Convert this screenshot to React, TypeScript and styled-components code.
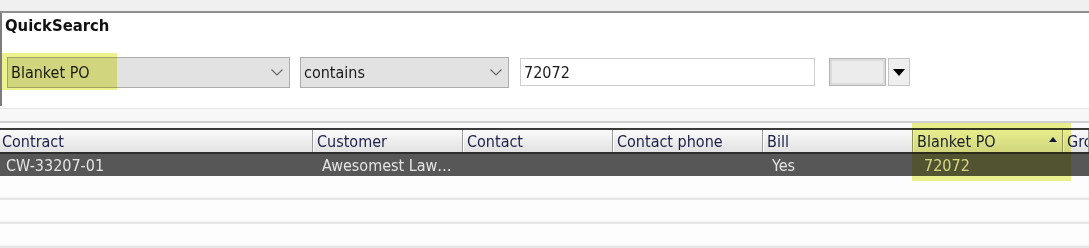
import React from "react";
import styled, { createGlobalStyle } from "styled-components";

const Global = createGlobalStyle`
  html, body { margin: 0; padding: 0; background: #ffffff; }
  body { font-family: "DejaVu Sans Condensed", "DejaVu Sans", sans-serif; width: 1089px; height: 248px; overflow: hidden; }
`;

const Page = styled.div`
  position: relative;
  width: 1089px;
  height: 248px;
  overflow: hidden;
`;

const TopStrip = styled.div`
  height: 11px;
  background: #f0f0f0;
  border-bottom: 2px solid #8e8e8e;
`;

const Panel = styled.section`
  height: 93px;
  box-sizing: border-box;
  border-left: 2px solid #7c7c7c;
  padding: 3px 0 0 3px;
  background: #ffffff;
`;

const Title = styled.div`
  font-weight: bold;
  font-size: 16.5px;
  line-height: 20px;
  color: #111111;
`;

const Controls = styled.div`
  display: flex;
  align-items: flex-start;
  margin-top: 21px;
  margin-left: 2px;
`;

const Select = styled.div<{ $w: number; $ml?: number }>`
  width: ${(p) => p.$w}px;
  margin-left: ${(p) => p.$ml ?? 0}px;
  height: 31px;
  box-sizing: border-box;
  border: 1px solid #acacac;
  background: #e2e2e2;
  display: flex;
  align-items: center;
  justify-content: space-between;
  padding: 0 6px 0 3px;
  font-size: 16px;
  color: #1a1a1a;
`;

const Chevron = () => (
  <svg width="12" height="7" viewBox="0 0 12 7">
    <path d="M0.5 0.5 L6 6 L11.5 0.5" fill="none" stroke="#6a6a6a" strokeWidth="1.2" />
  </svg>
);

const TextInput = styled.div`
  width: 295px;
  margin-left: 11px;
  margin-top: 1px;
  height: 28px;
  box-sizing: border-box;
  border: 1px solid #cdcdcd;
  background: #ffffff;
  display: flex;
  align-items: center;
  padding-left: 3px;
  font-size: 16px;
  color: #1a1a1a;
`;

const ColorBox = styled.div`
  width: 57px;
  margin-left: 14px;
  margin-top: 1px;
  height: 28px;
  box-sizing: border-box;
  border: 1px solid #b4b4b4;
  box-shadow: inset 0 0 0 2px #dcdcdc;
  background: #ececec;
`;

const DropButton = styled.div`
  width: 22px;
  margin-left: 2px;
  margin-top: 1px;
  height: 28px;
  box-sizing: border-box;
  border: 1px solid #c4c4c4;
  background: #efefef;
  display: flex;
  align-items: center;
  justify-content: center;
`;

const Separator = styled.div`
  height: 22px;
  box-sizing: border-box;
  border-top: 2px solid #ffffff;
  background: linear-gradient(
    to bottom,
    #e4e4e4 0px,
    #e4e4e4 1px,
    #f7f7f7 1px,
    #f7f7f7 13px,
    #cfcfcf 13px,
    #cfcfcf 15px,
    #fbfbfb 15px
  );
`;

const COLS = "313px 150px 150px 150px 150px 150px 1fr";

const Header = styled.div`
  display: grid;
  grid-template-columns: ${COLS};
  height: 26px;
  box-sizing: border-box;
  border-top: 2px solid #3a3a3a;
  border-bottom: 2px solid #2e2e2e;
  background: linear-gradient(to bottom, #fbfbfb 0%, #efefef 45%, #e2e2e2 100%);
`;

const HeadCell = styled.div<{ $first?: boolean }>`
  position: relative;
  display: flex;
  align-items: center;
  box-sizing: border-box;
  padding-left: ${(p) => (p.$first ? 2 : 3)}px;
  border-right: 1px solid #9c9c9c;
  border-left: ${(p) => (p.$first ? "none" : "1px solid #ffffff")};
  font-size: 16px;
  color: #1b1f48;
  white-space: nowrap;
  overflow: hidden;
`;

const SortArrow = styled.span`
  position: absolute;
  right: 5px;
  top: 7px;
  width: 0;
  height: 0;
  border-left: 4px solid transparent;
  border-right: 4px solid transparent;
  border-bottom: 5px solid #101a6e;
`;

const Row = styled.div<{ $selected?: boolean }>`
  display: grid;
  grid-template-columns: ${COLS};
  height: ${(p) => (p.$selected ? 22 : 24)}px;
  box-sizing: border-box;
  background: ${(p) => (p.$selected ? "#575757" : "#fdfdfd")};
  border-bottom: ${(p) => (p.$selected ? "none" : "2px solid #e6e6e6")};
  box-shadow: ${(p) => (p.$selected ? "none" : "inset 0 -3px 0 -2px #f3f3f3")};
`;

const Cell = styled.div<{ $pad: number }>`
  display: flex;
  align-items: center;
  padding-left: ${(p) => p.$pad}px;
  font-size: 16px;
  color: #e4e4e4;
  white-space: nowrap;
  overflow: hidden;
`;

const Highlight = styled.div`
  position: absolute;
  background: #ecf28e;
  mix-blend-mode: multiply;
  filter: blur(0.6px);
  pointer-events: none;
`;

const headers = ["Contract", "Customer", "Contact", "Contact phone", "Bill", "Blanket PO", "Gro"];
const row = ["CW-33207-01", "Awesomest Law…", "", "", "Yes", "72072", ""];
const pads = [6, 9, 9, 9, 9, 11, 9];

export default function App() {
  return (
    <Page>
      <Global />
      <TopStrip />
      <Panel>
        <Title>QuickSearch</Title>
        <Controls>
          <Select $w={283}>
            <span>Blanket PO</span>
            <Chevron />
          </Select>
          <Select $w={209} $ml={10}>
            <span>contains</span>
            <Chevron />
          </Select>
          <TextInput>72072</TextInput>
          <ColorBox />
          <DropButton>
            <svg width="12" height="7" viewBox="0 0 12 7">
              <path d="M0 0 H12 L6 7 Z" fill="#000" />
            </svg>
          </DropButton>
        </Controls>
      </Panel>
      <Separator />
      <Header>
        {headers.map((h, i) => (
          <HeadCell key={h} $first={i === 0}>
            {h}
            {h === "Blanket PO" && <SortArrow />}
          </HeadCell>
        ))}
      </Header>
      <Row $selected>
        {row.map((c, i) => (
          <Cell key={i} $pad={pads[i]}>
            {c}
          </Cell>
        ))}
      </Row>
      <Row />
      <Row />
      <Row />
      <Highlight style={{ left: 2, top: 53, width: 115, height: 37 }} />
      <Highlight style={{ left: 912, top: 123, width: 159, height: 58 }} />
    </Page>
  );
}
